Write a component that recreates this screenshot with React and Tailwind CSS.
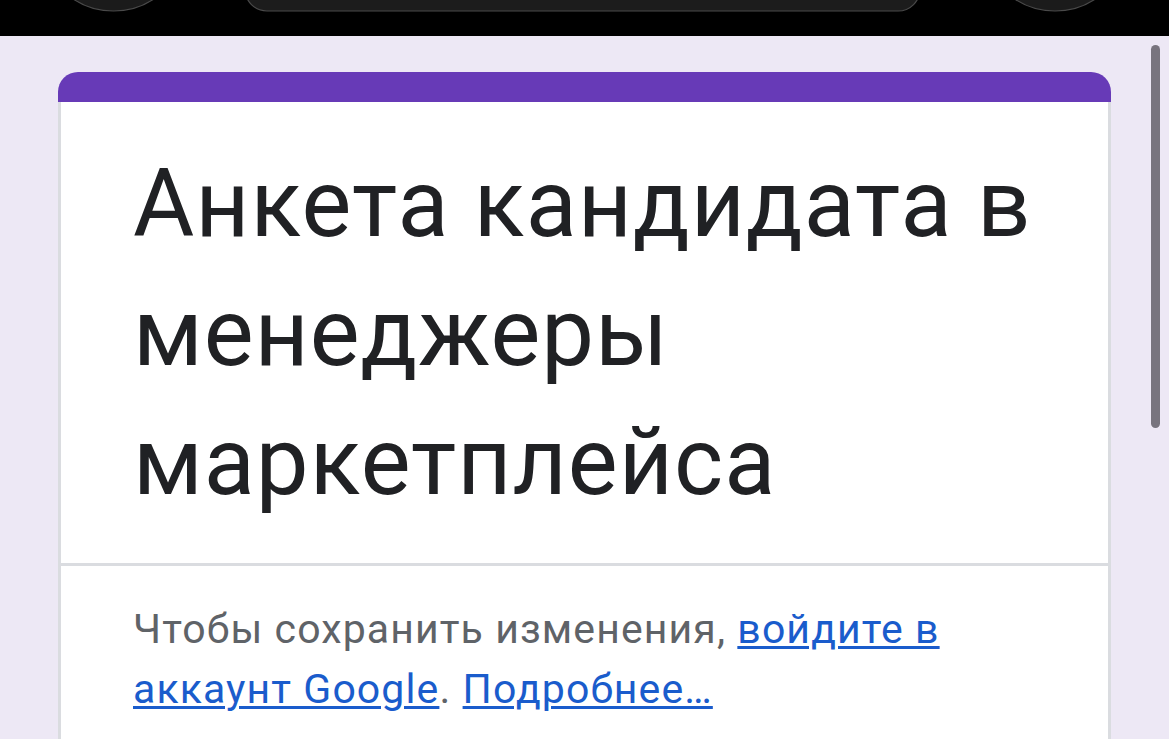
import React from 'react';

function StatusBar() {
  return (
    <div className="h-[36px] shrink-0 bg-black">
      <svg width="1169" height="36" viewBox="0 0 1169 36" className="block">
        <circle cx="113.5" cy="-62" r="73" fill="#1b1b1b" stroke="#4a4a4a" strokeWidth="1.2" />
        <rect x="245" y="-40" width="675" height="51" rx="22" fill="#1c1c1c" stroke="#4a4a4a" strokeWidth="1.2" />
        <circle cx="1055" cy="-62" r="73" fill="#1b1b1b" stroke="#4a4a4a" strokeWidth="1.2" />
      </svg>
    </div>
  );
}

export default function App() {
  return (
    <div
      className="relative flex h-[739px] w-full flex-col overflow-hidden bg-[#ede8f5]"
      style={{ fontFamily: 'Roboto, "Noto Sans", sans-serif' }}
    >
      <StatusBar />

      <main className="px-[58px] pt-[36px]">
        <div className="overflow-hidden rounded-t-[20px]">
          <div className="h-[30px] bg-[#673ab7]" />
          <div className="border-x-[3px] border-[#dadce0] bg-white">
            <div className="border-b-[3px] border-[#dadce0] pb-[36px] pl-[72px] pr-[50px] pt-[38px]">
              <h1 className="text-[94px] font-normal leading-[129px] tracking-[1px] text-[#202124]">
                Анкета кандидата в менеджеры маркетплейса
              </h1>
            </div>
            <div className="pb-[80px] pl-[72px] pr-[60px] pt-[33px]">
              <p className="text-[41px] leading-[60px] tracking-[1.1px] text-[#5f6368]">
                Чтобы сохранить изменения,{' '}
                <a href="#" className="text-[#1a5ccc] underline decoration-[3px] underline-offset-[3px]">
                  войдите в аккаунт Google
                </a>
                .{' '}
                <a href="#" className="text-[#1a5ccc] underline decoration-[3px] underline-offset-[3px]">
                  Подробнее…
                </a>
              </p>
            </div>
          </div>
        </div>
      </main>

      <div className="absolute left-[1151px] top-[45px] h-[383px] w-[9px] rounded-full bg-[#78747e]" />
    </div>
  );
}
